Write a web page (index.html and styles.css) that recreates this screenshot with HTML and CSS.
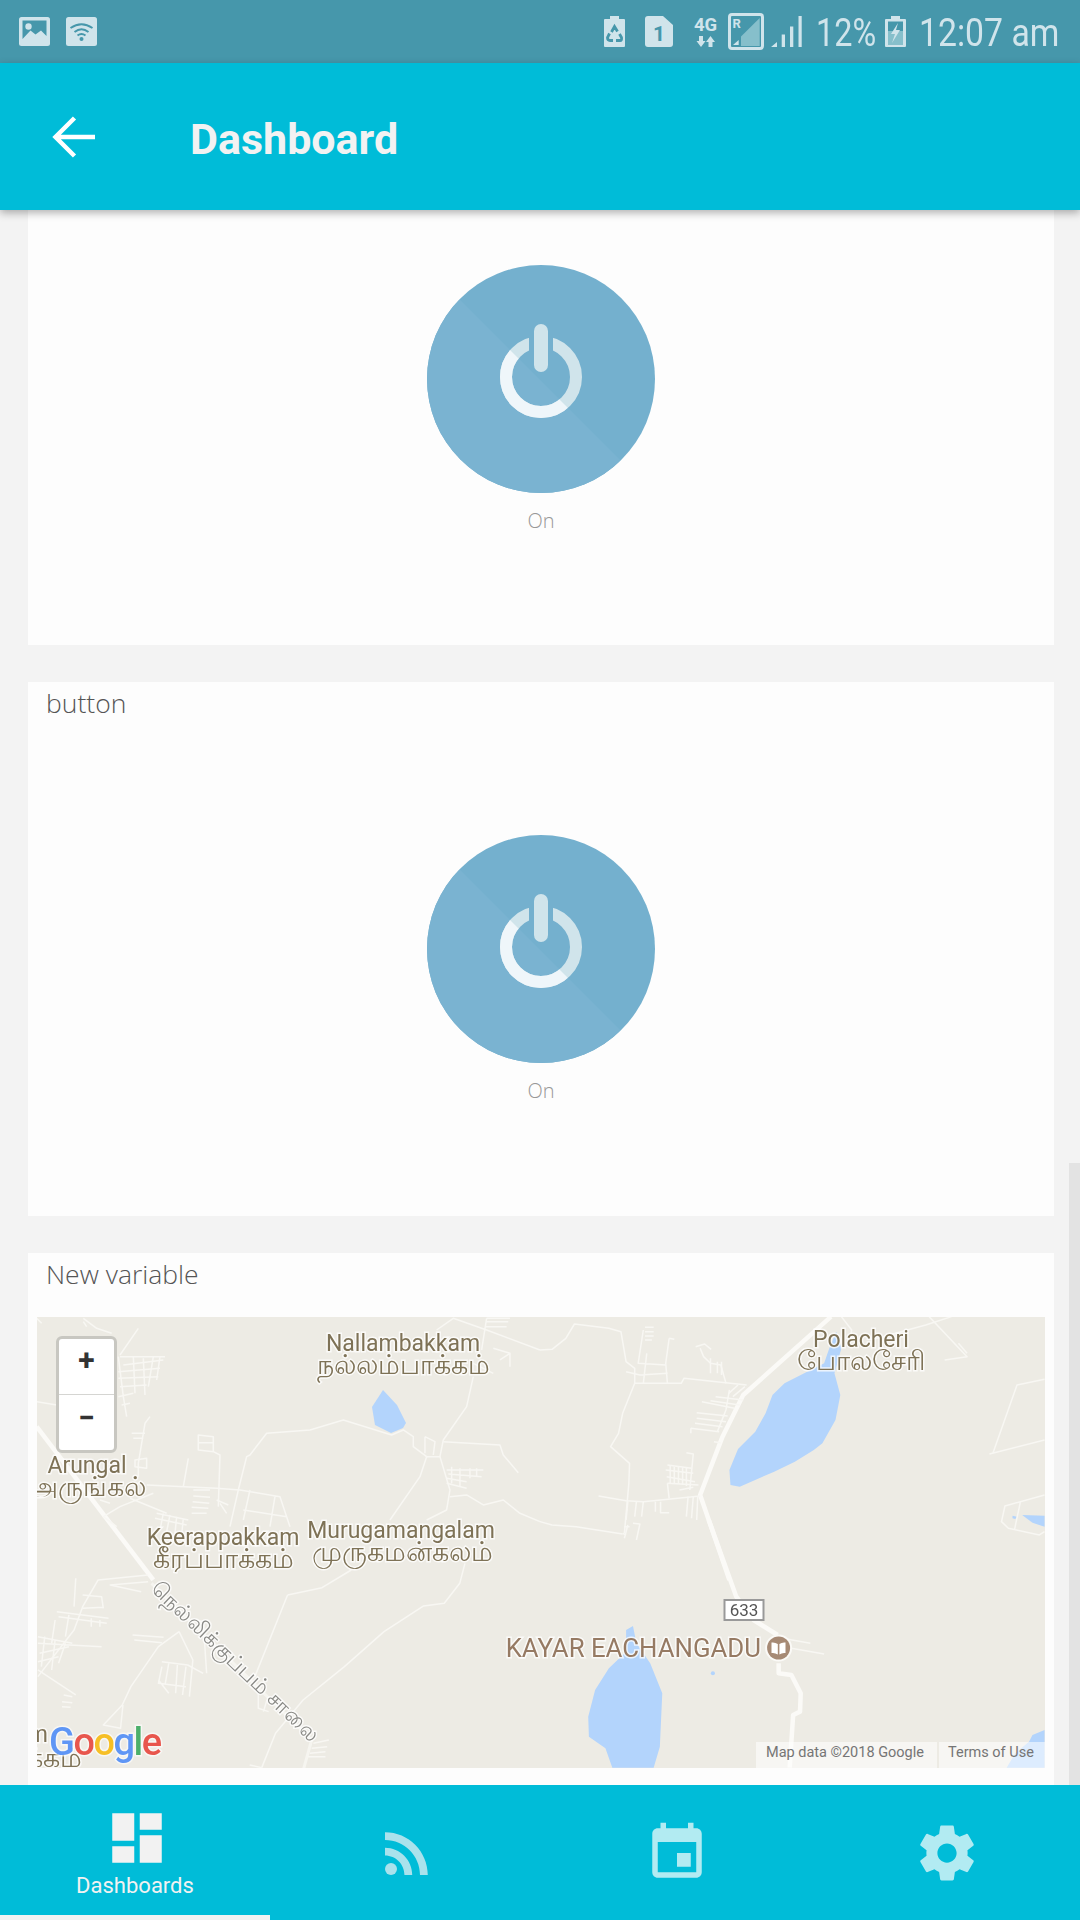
FILE: index.html
```html
<!DOCTYPE html>
<html lang="en">
<head>
<meta charset="utf-8">
<title>Dashboard</title>
<link rel="stylesheet" href="styles.css">
</head>
<body>
<div class="page">
  <div class="status">
    <div class="status-group">
      <svg class="si si-pic" viewBox="0 0 31 29"><rect class="s-light" width="31" height="29" rx="2.5"/><path class="s-dark" d="M3.5 3.5H27.5V19L22 13.5 16.5 17.5 11.5 13.5 3.5 22Z"/><circle class="s-light" cx="9.5" cy="9.5" r="3.2"/></svg>
      <svg class="si si-wifi" viewBox="0 0 31 29"><rect class="s-light" width="31" height="29" rx="2.5"/><path class="s-arc" d="M4.500 11Q15.500 3.500 26.500 11M8.500 15Q15.500 9.500 22.500 15M11.500 18.500Q15.500 15.500 19.500 18.500"/><circle class="s-dark" cx="15.500" cy="22" r="2"/></svg>
    </div>
    <div class="status-group">
      <svg class="si si-rec" viewBox="0 0 21 31"><path class="s-light" d="M6 0H15V3H20A1 1 0 0 1 21 4V30A1 1 0 0 1 20 31H1A1 1 0 0 1 0 30V4A1 1 0 0 1 1 3H6Z"/><path class="s-rc" d="M7.500 16L10.500 10.500 13.500 15.500M5.500 17.500L3.500 21.500Q3.500 24.500 6 24.500H9M12 24.500H16Q18 24.500 17.500 21.500L15.500 18"/></svg>
      <svg class="si si-sim" viewBox="0 0 28 31"><path class="s-light" d="M3 0H18L28 9V28A3 3 0 0 1 25 31H3A3 3 0 0 1 0 28V3A3 3 0 0 1 3 0Z"/><text class="s-one" x="14" y="25" text-anchor="middle">1</text></svg>
      <svg class="si si-4g" viewBox="0 0 25 31"><text class="s-4g" x="12.500" y="14" text-anchor="middle">4G</text><path class="s-light" d="M6 19H10V24H12.500L8 30 3.500 24H6ZM15.500 30H19.500V25H22L17.500 19 13 25H15.500Z"/></svg>
      <svg class="si si-r" viewBox="0 0 36 37"><rect class="s-box" x="1.500" y="1.500" width="33" height="34" rx="2.500"/><text class="s-r" x="4.500" y="15">R</text><path class="s-mid" d="M31.700 5V33H13V23.500Z"/><path class="s-light" d="M5 32L10.700 27V32Z"/></svg>
      <svg class="si si-bars" viewBox="0 0 31 31"><path class="s-light" d="M0 31L6 26V31ZM10.700 18.500H14V31H10.700ZM19 10.500H22.300V31H19ZM27.500 0H30.700V31H27.500Z"/></svg>
      <span class="s-text s-pct">12%</span>
      <svg class="si si-bat" viewBox="0 0 21 31"><path class="s-light" d="M6 0H15V3H20A1 1 0 0 1 21 4V30A1 1 0 0 1 20 31H1A1 1 0 0 1 0 30V4A1 1 0 0 1 1 3H6Z"/><rect class="s-dark" x="3" y="5.500" width="15" height="23"/><rect class="s-mid" x="3" y="15" width="15" height="13.500"/><path class="s-light" d="M13 7L6 18H10L7 27 15 14H11Z"/></svg>
      <span class="s-text s-time">12:07 am</span>
    </div>
  </div>

  <header class="header">
    <svg class="back" viewBox="0 0 52 48"><path d="M49 24H9.500M28.500 5L9.500 24 28.500 43"/></svg>
    <h1 class="title">Dashboard</h1>
  </header>

  <main class="content">
    <div class="cards">
      <section class="card">
        <div class="card-title"></div>
        <svg class="power" viewBox="0 0 228 228">
          <defs>
            <clipPath id="ll"><polygon points="0,2 228,230 0,230"/></clipPath>
            <mask id="gap" maskUnits="userSpaceOnUse" x="0" y="0" width="228" height="228"><rect class="m-on" width="228" height="228"/><rect class="m-off" x="102" y="40" width="24" height="72"/></mask>
            <g id="glyph"><circle class="ring" cx="114" cy="112" r="35" mask="url(#gap)"/><rect class="stem" x="107" y="59" width="14" height="48" rx="7"/></g>
            <g id="pw">
              <circle class="disc-a" cx="114" cy="114" r="114"/>
              <circle class="disc-b" cx="114" cy="114" r="114" clip-path="url(#ll)"/>
              <use href="#glyph" class="g-a"/>
              <g clip-path="url(#ll)"><use href="#glyph" class="g-b"/></g>
            </g>
          </defs>
          <use href="#pw"/>
        </svg>
        <div class="state">On</div>
      </section>

      <section class="card">
        <div class="card-title">button</div>
        <svg class="power" viewBox="0 0 228 228"><use href="#pw"/></svg>
        <div class="state">On</div>
      </section>

      <section class="card card-map">
        <div class="card-title">New variable</div>
        <div class="map">
          <svg class="map-art" viewBox="37 1317 1008 451">
            <!-- water -->
            <path class="lake" d="M383 1390L397 1405 406 1423 403 1428 391 1433 375 1425 372 1407Z"/>
            <g transform="translate(540 1250) scale(.3444 .3333)">
              <path class="lake" d="M860 245L875 295 855 370 872 435 858 510 820 580 795 600 740 635 680 665 580 710 553 705 550 660 575 597 625 545 655 490 675 435 710 400 770 368 825 340 840 295Z"/>
              <path class="lake" d="M1400 795L1465 797V830L1430 818Z"/>
              <path class="lake" d="M1372 797L1385 800 1380 807 1372 805Z"/>
              <g class="road-thick">
                <path d="M845 200L590 435 530 560 465 735 550 990"/>
              </g>
              <g class="road-thin">
                <path d="M0 300L35 298 75 265 100 222 200 235 235 245 250 335 275 355 275 400 410 400 418 385 600 405"/>
                <path d="M275 400L240 490 228 550 205 590 260 640 258 700 245 850"/>
                <path d="M170 738L250 752 300 755 465 738"/>
                <path d="M0 815L35 825 105 830 240 852"/>
                <path d="M300 240L285 340 365 345M310 310L300 400M250 365L290 375 370 370"/>
                <path d="M375 265L390 268M375 265L365 340 370 400"/>
                <path d="M452 290L478 282 497 298M465 295L475 320 495 340 525 345 540 400"/>
                <path d="M495 325V370M515 335V370M527 335V375"/>
                <path d="M305 232H330M305 245H330M305 258H330M305 270H325"/>
                <path d="M1305 612L1465 570M1315 610L1385 405 1465 388"/>
                <path d="M875 200L905 240 900 270M1130 200L1240 320 1175 330M1195 200L1120 225 960 270"/>
                <path d="M1215 280L1240 310"/>
                <path d="M1465 735L1350 768 1340 815 1360 835 1450 855 1465 845M1395 755L1378 838"/>
                <path d="M548 430L575 405M560 440L595 410"/>
                <path d="M510 440L590 450M495 452L580 465M470 455L565 475M455 488L545 498M455 505L540 515M450 520L530 530M438 535L520 545M438 550V535"/>
                <path d="M550 420L540 480 515 545M505 575L525 578"/>
                <path d="M425 608L445 612 435 720"/>
                <path d="M370 645L440 655M365 660L445 670M368 680L450 695M370 700L460 705M405 720L445 712"/>
                <path d="M378 645V700M390 650V702M402 650V702M414 652V705M425 652V708M370 700L375 745"/>
                <path d="M430 740L425 800M445 740L440 805M458 740L455 810"/>
                <path d="M255 755L250 810M280 755L275 800M300 755L295 800M335 755V785M350 755V788H375"/>
                <path d="M245 830H260M240 850L250 855M270 820L290 822 280 870M255 825L245 865"/>
              </g>
            </g>
            <g transform="translate(20 1250) scale(.3333)">
              <g class="road-thick"><path d="M50 530L400 990"/></g>
              <g class="road-thin">
                <path d="M50 455L110 465M355 235L300 315"/>
                <path d="M1360 380L1340 470 1270 570 1260 620H1220L1180 590V560L1150 540 1115 555 970 510 870 540 740 550 690 615 680 620 655 720 630 830"/>
                <path d="M1220 620L1200 680 1110 810M1260 620L1290 720 1280 780 1220 810M1270 575L1440 585 1450 615 1495 668"/>
                <path d="M1290 740L1340 735 1390 765 1450 750 1500 790 1560 815"/>
                <path d="M1250 240L1300 205 1400 240 1560 300M1400 205L1385 300M1400 205H1470M1400 215H1465M1395 230H1460M1420 295L1470 310 1440 330M1470 310V350"/>
                <path d="M1360 340L1420 370"/>
                <path d="M50 205L65 220M190 205L230 235 275 250M190 215L200 230"/>
                <path d="M490 710L505 625M535 555L580 560V605L535 600ZM535 578H580M580 605L600 615 595 770"/>
                <path d="M380 705L590 715 660 720 780 740 800 800 810 830M690 720L670 810M670 780L800 800M765 740L750 830"/>
                <path d="M390 500L375 520 355 640V680M335 550H375M340 565H370"/>
                <path d="M345 630L380 625V655L345 650Z"/>
                <path d="M300 320L435 320M310 345L430 330M295 365L420 355M295 385L415 380M300 410L380 405M295 440L340 430M305 465L330 460"/>
                <path d="M295 320L310 440 320 500M340 320L345 430M370 325L375 435M400 320L385 410M420 320L410 390"/>
                <path d="M400 730L300 770 250 800 290 830M330 745L440 790M270 760L240 750"/>
                <path d="M520 720H570M520 738L570 742M518 755L568 760M515 772L565 775M515 790L560 790M590 750L625 765M600 760L620 790"/>
                <path d="M410 790L505 810M405 805L500 825M430 790L420 840M450 795L440 845M470 800L465 850M490 805L485 855"/>
                <path d="M1280 660H1390M1285 672L1385 680M1280 685L1340 695M1280 700L1340 715M1295 650V700M1320 655V710M1350 655V685M1370 655V680"/>
                <path d="M1215 560L1245 575 1240 615M1215 560V610"/>
              </g>
            </g>
            <g transform="translate(0 1520) scale(.3444 .3333)">
              <g class="road-thick road-soft">
                <path d="M440 190L905 660 882 745"/>
              </g>
              <g class="road-thin">
                <path d="M430 165L285 180 240 260 215 330 110 470M220 175L215 260M430 185L320 195 410 215"/>
                <path d="M240 225L295 230 300 265M240 265L300 262"/>
                <path d="M165 275L315 295M170 290L310 310M265 295V320M290 300V320M200 285L190 350M160 300L150 370"/>
                <path d="M110 350L210 370M110 370L295 380M115 400L200 380M110 425L170 410M110 450L220 525M130 350L120 440M160 360L150 450M190 370L170 430"/>
                <path d="M185 525L210 530M180 545L210 548M180 560L205 562"/>
                <path d="M520 335L460 380 380 500 355 555 300 615 350 625 357 555"/>
                <path d="M385 345L475 352M390 360L470 368M520 335L560 420 550 530"/>
                <path d="M470 425L545 435 590 460M470 440L460 490 540 500M490 430L480 490M515 435L510 520M540 440L530 525M460 480L490 520"/>
                <path d="M570 300L590 305 600 460"/>
                <path d="M835 225L740 470M835 225L935 203 1020 150"/>
                <path d="M1350 130L1335 190 1290 250 1230 258 1115 335 1000 440 880 540 800 640 760 743"/>
                <path d="M750 520V565L780 575M775 540L765 575"/>
                <path d="M910 670L955 660M905 685L950 680M900 700L945 695M895 710L945 710"/>
                <path d="M725 735L760 743"/>
              </g>
            </g>
            <g transform="translate(540 1520) scale(.3444 .3333)">
              <path class="lake" d="M270 318L280 370 320 430 355 520 348 680 330 743H210L190 685 142 650 140 590 160 510 200 445 250 395 250 330Z"/>
              <circle class="lake" cx="502" cy="460" r="6"/>
              <path class="lake" d="M1465 630L1430 645 1420 665 1380 700 1355 743H1465Z"/>
              <g class="road-thick"><path d="M490 0L570 230 620 300 690 345"/><path d="M693 430V460L730 465 757 520 755 575 735 585 725 743"/></g>
              <g class="road-thin"><path d="M720 358L785 370M730 385L825 402"/></g>
            </g>
            <!-- labels -->
            <g class="labels">
              <text class="lb" x="403" y="1351" text-anchor="middle">Nallambakkam</text>
              <text class="lb lb-ta" x="403" y="1374" text-anchor="middle">நல்லம்பாக்கம்</text>
              <text class="lb" x="87" y="1473" text-anchor="middle">Arungal</text>
              <text class="lb lb-ta" x="87" y="1496" text-anchor="middle">அருங்கல்</text>
              <text class="lb" x="223" y="1545" text-anchor="middle">Keerappakkam</text>
              <text class="lb lb-ta" x="223" y="1568" text-anchor="middle">கீரப்பாக்கம்</text>
              <text class="lb" x="401" y="1538" text-anchor="middle">Murugamangalam</text>
              <text class="lb lb-ta" x="402" y="1561" text-anchor="middle">முருகமன்கலம்</text>
              <text class="lb" x="861" y="1347" text-anchor="middle">Polacheri</text>
              <text class="lb lb-ta" x="861" y="1370" text-anchor="middle">போலசேரி</text>
              <text class="lb lb-poi" x="761" y="1657" text-anchor="end">KAYAR EACHANGADU</text>
              <text class="lb-road" transform="translate(150 1590) rotate(43.500)">நெல்லிக்குப்பம் சாலை</text>
              <text class="lb" x="48" y="1742" text-anchor="end">m</text>
              <text class="lb lb-ta" x="82" y="1767" text-anchor="end">க்கம்</text>
            </g>
            <rect class="shield" x="724.500" y="1600" width="39" height="20"/>
            <text class="shield-t" x="744" y="1616" text-anchor="middle">633</text>
            <circle class="poi-halo" cx="778.600" cy="1648" r="13.500"/>
            <circle class="poi" cx="778.600" cy="1648" r="11.500"/>
            <path class="poi-book" d="M771.500 1642.500Q775 1642 777.800 1644V1654.500Q775 1652.500 771.500 1653ZM785.500 1642.500Q782 1642 779.400 1644V1654.500Q782 1652.500 785.500 1653Z"/>
            <text class="google" x="49" y="1755"><tspan class="g-blue">G</tspan><tspan class="g-red">o</tspan><tspan class="g-yellow">o</tspan><tspan class="g-blue">g</tspan><tspan class="g-green">l</tspan><tspan class="g-red">e</tspan></text>
          </svg>
          <div class="zoom-ctl">
            <div class="zoom-btn zoom-plus">+</div>
            <div class="zoom-btn zoom-minus">−</div>
          </div>
          <div class="attrib">
            <span class="attrib-item attrib-data">Map data ©2018 Google</span>
            <span class="attrib-item attrib-terms">Terms of Use</span>
          </div>
        </div>
      </section>
    </div>
    <div class="scrollthumb"></div>
  </main>

  <nav class="nav">
    <div class="nav-item active">
      <svg class="nav-icon" viewBox="0 0 24 24"><path d="M3 13h8V3H3v10zm0 8h8v-6H3v6zm10 0h8V11h-8v10zm0-18v6h8V3h-8z"/></svg>
      <span class="nav-label">Dashboards</span>
    </div>
    <div class="nav-item">
      <svg class="nav-icon" viewBox="0 0 24 24"><circle cx="6.180" cy="17.820" r="2.180"/><path d="M4 4.440v2.830c7.030 0 12.730 5.700 12.730 12.730h2.830c0-8.590-6.970-15.560-15.560-15.560zm0 5.660v2.830c3.900 0 7.070 3.170 7.070 7.070h2.830c0-5.470-4.430-9.900-9.900-9.900z"/></svg>
    </div>
    <div class="nav-item">
      <svg class="nav-icon nav-bright" viewBox="0 0 24 24"><path d="M17 12h-5v5h5v-5zM16 1v2H8V1H6v2H5c-1.110 0-1.990.9-1.990 2L3 19c0 1.100.89 2 2 2h14c1.100 0 2-.9 2-2V5c0-1.100-.9-2-2-2h-1V1h-2zm3 18H5V8h14v11z"/></svg>
    </div>
    <div class="nav-item">
      <svg class="nav-icon nav-bright" viewBox="0 0 24 24"><path d="M19.430 12.980c.04-.32.07-.64.07-.98s-.03-.66-.07-.98l2.110-1.650c.19-.15.24-.42.12-.64l-2-3.460c-.12-.22-.39-.3-.61-.22l-2.490 1c-.52-.4-1.080-.73-1.690-.98l-.38-2.650C14.460 2.180 14.250 2 14 2h-4c-.25 0-.46.18-.49.42l-.38 2.650c-.61.25-1.170.59-1.690.98l-2.490-1c-.23-.09-.49 0-.61.22l-2 3.460c-.13.22-.07.49.12.64l2.110 1.650c-.04.32-.07.65-.07.98s.03.66.07.98l-2.110 1.650c-.19.15-.24.42-.12.64l2 3.460c.12.22.39.3.61.22l2.490-1c.52.4 1.080.73 1.690.98l.38 2.650c.03.24.24.42.49.42h4c.25 0 .46-.18.49-.42l.38-2.650c.61-.25 1.170-.59 1.690-.98l2.490 1c.23.09.49 0 .61-.22l2-3.460c.12-.22.07-.49-.12-.64l-2.110-1.650zM12 15.500c-1.930 0-3.500-1.570-3.500-3.500s1.570-3.500 3.500-3.500 3.500 1.570 3.500 3.500-1.570 3.500-3.500 3.500z"/></svg>
    </div>
  </nav>
</div>
</body>
</html>
```
FILE: styles.css
```css
* { box-sizing: border-box; }
html, body { margin: 0; padding: 0; }
body { font-family: Roboto, "Noto Sans", sans-serif; background: #f3f3f3; }

.page { width: 1080px; height: 1920px; display: flex; flex-direction: column; overflow: hidden; background: #f3f3f3; }

/* status bar */
.status { height: 63px; flex: none; background: #4697ab; display: flex; justify-content: space-between; align-items: flex-start; padding: 0 22px 0 19px; }
.status-group { display: flex; align-items: flex-start; }
.si { display: block; flex: none; overflow: visible; }
.si-pic, .si-wifi { width: 31px; height: 29px; margin-top: 17px; }
.si-wifi { margin-left: 16px; }
.si-rec { width: 21px; height: 31px; margin-top: 16px; }
.si-sim { width: 28px; height: 31px; margin-top: 16px; margin-left: 20px; }
.si-4g { width: 25px; height: 31px; margin-top: 17px; margin-left: 20px; }
.si-r { width: 36px; height: 37px; margin-top: 13px; margin-left: 10px; }
.si-bars { width: 31px; height: 31px; margin-top: 16px; margin-left: 7px; }
.si-bat { width: 21px; height: 31px; margin-top: 16px; margin-left: 9px; }
.s-light { fill: #d0e4eb; }
.s-dark { fill: #4697ab; }
.s-mid { fill: #86bfcb; }
.s-arc { fill: none; stroke: #4697ab; stroke-width: 1.9; }
.s-rc { fill: none; stroke: #4697ab; stroke-width: 2.8; }
.s-box { fill: none; stroke: #d0e4eb; stroke-width: 3; }
.s-one { fill: #4697ab; font: 700 21px Roboto, sans-serif; }
.s-4g { fill: #d0e4eb; font: 700 18.500px Roboto, sans-serif; }
.s-r { fill: #d0e4eb; font: 700 13px Roboto, sans-serif; }
.s-text { display: block; flex: none; height: 63px; line-height: 66px; font-size: 39px; font-weight: 400; color: #d0e4eb; white-space: nowrap; transform-origin: left center; }
.s-pct { width: 60px; margin-left: 14px; transform: scaleX(.83); }
.s-time { width: 139px; margin-left: 13px; transform: scaleX(.865); }

/* header */
.header { height: 147px; flex: none; background: #00bcd8; display: flex; align-items: center; padding-left: 46px; box-shadow: 0 3px 8px rgba(0,0,0,.3); position: relative; z-index: 2; }
.back { width: 52px; height: 48px; flex: none; }
.back path { fill: none; stroke: #fff; stroke-width: 4.5; }
.title { margin: 5px 0 0 92px; font-size: 43px; line-height: 56px; font-weight: 700; color: #f2f2f2; }

/* content */
.content { flex: 1; min-height: 0; overflow: hidden; position: relative; }
.cards { margin: -98px 0 0 28px; width: 1026px; display: flex; flex-direction: column; gap: 37px; }
.card { height: 534px; flex: none; background: #fdfdfd; display: flex; flex-direction: column; align-items: center; }
.card:first-child { height: 533px; }
.card-title { align-self: stretch; height: 44px; padding-left: 18px; font-family: "Open Sans", sans-serif; font-weight: 300; font-size: 26.500px; line-height: 43px; color: #555; }
.power { width: 228px; height: 228px; margin-top: 109px; flex: none; display: block; }
.disc-a { fill: #74b0ce; }
.disc-b { fill: #7ab3d1; }
.m-on { fill: #fff; }
.m-off { fill: #000; }
.ring { fill: none; stroke: currentColor; stroke-width: 12; }
.stem { fill: currentColor; }
.g-a { color: #d0e4eb; }
.g-b { color: #eff6fa; }
.state { margin-top: 14px; height: 28px; line-height: 28px; font-family: "Open Sans", sans-serif; font-weight: 300; font-size: 20px; color: #999; }
.scrollthumb { position: absolute; right: 0; top: 953px; bottom: 0; width: 11px; background: #e3e3e3; }

/* map */
.card-map { height: 600px; align-items: stretch; }
.map { position: relative; margin: 20px 9px 0; height: 451px; overflow: hidden; background: #edebe4; }
.map-art { display: block; width: 1008px; height: 451px; filter: blur(.5px); }
.lake { fill: #b3d4fc; }
.road-thick path { fill: none; stroke: #fbfaf7; stroke-width: 4.5; stroke-linejoin: round; vector-effect: non-scaling-stroke; }
.road-soft path { stroke: #f6f5f0; stroke-width: 3; }
.road-thin path { fill: none; stroke: #f8f7f3; stroke-width: 1.5; stroke-linejoin: round; vector-effect: non-scaling-stroke; }
.lb { font: 400 23px Roboto, "Noto Sans", sans-serif; fill: #7e7256; paint-order: stroke; stroke: rgba(255,255,255,.75); stroke-width: 3px; }
.lb-ta { font-size: 26.500px; }
.lb-poi { font-size: 25.800px; fill: #967a63; }
.lb-road { font: 400 21.500px Roboto, "Noto Sans", sans-serif; fill: #8a8a86; paint-order: stroke; stroke: rgba(255,255,255,.75); stroke-width: 3px; }
.shield { fill: #fff; stroke: #999; stroke-width: 2; }
.shield-t { font: 400 17px Roboto, sans-serif; fill: #555; }
.poi-halo { fill: #fbfaf7; }
.poi { fill: #a68a75; }
.poi-book { fill: #fff; }
.google { font: 500 38px Roboto, sans-serif; paint-order: stroke; stroke: rgba(255,255,255,.6); stroke-width: 3px; letter-spacing: -1.5px; }
.g-blue { fill: #5f96f5; }
.g-red { fill: #e8564d; }
.g-yellow { fill: #f6bf26; }
.g-green { fill: #4caf6b; }
.zoom-ctl { position: absolute; left: 19px; top: 19px; width: 61px; height: 117px; background: #fff; border: 3px solid #c8c7c1; border-radius: 6px; display: flex; flex-direction: column; }
.zoom-btn { flex: 1; display: flex; justify-content: center; font: 700 30px/42px Roboto, sans-serif; color: #333; }
.zoom-minus { line-height: 46px; }
.zoom-plus { border-bottom: 1px solid #d5d5d2; }
.attrib { position: absolute; right: 0; bottom: 0; display: flex; gap: 2px; }
.attrib-item { height: 26px; line-height: 21px; background: rgba(255,255,255,.55); font-size: 14.500px; color: #757575; white-space: nowrap; }
.attrib-data { width: 181px; padding-left: 10px; }
.attrib-terms { width: 106px; padding-left: 9px; }

/* nav */
.nav { height: 135px; flex: none; background: #00bcd8; display: grid; grid-template-columns: repeat(4, 270px); position: relative; z-index: 2; }
.nav-item { position: relative; display: flex; flex-direction: column; align-items: center; padding-top: 35px; }
.nav-item.active { padding-top: 20px; border-bottom: 5px solid #f2f2f2; }
.nav-icon { width: 66px; height: 66px; flex: none; margin-left: 4px; fill: #aae2ec; }
.nav-bright { fill: #b2ebf2; }
.active .nav-icon { fill: #f2f2f2; }
.nav-label { font-size: 22px; line-height: 28px; color: #f2f2f2; margin-top: 1px; }
```
